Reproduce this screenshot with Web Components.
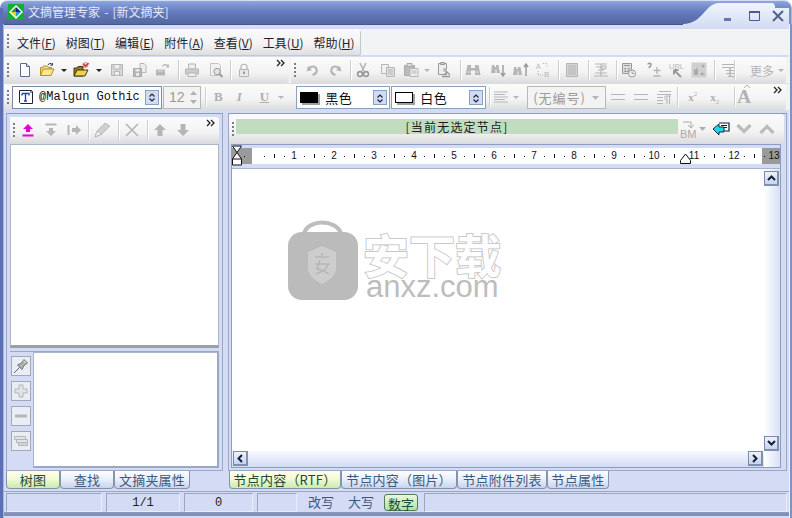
<!DOCTYPE html>
<html lang="zh"><head><meta charset="utf-8"><title>文摘管理专家</title>
<style>
html,body{margin:0;padding:0;width:792px;height:518px;overflow:hidden;background:#fff}
body{font:12px "Noto Sans CJK SC","Liberation Sans",sans-serif}
</style></head><body>
<app-window>
  <title-bar slot="title">文摘管理专家 - [新文摘夹]</title-bar>

  <div slot="rows" style="display:contents">
    <tool-row h="26" mt="5">
      <menu-bar>
        <menu-item key="F">文件</menu-item><menu-item key="T">树图</menu-item><menu-item key="E">编辑</menu-item><menu-item key="A">附件</menu-item><menu-item key="V">查看</menu-item><menu-item key="U">工具</menu-item><menu-item key="H">帮助</menu-item>
      </menu-bar>
    </tool-row>
    <tool-row h="26" mt="2">
      <tool-bar w="285" more>
        <tool-btn icon="new"></tool-btn><tool-btn icon="open" ml="6"></tool-btn><tool-btn icon="drop" ml="6" k></tool-btn><tool-btn icon="folder" ml="5"></tool-btn><tool-btn icon="drop" ml="7" k></tool-btn><tool-btn icon="save" ml="6"></tool-btn><tool-btn icon="saveas" ml="7"></tool-btn><tool-btn icon="pad" ml="6"></tool-btn><tool-sep ml="8"></tool-sep><tool-btn icon="print" ml="5"></tool-btn><tool-btn icon="preview" ml="8"></tool-btn><tool-sep ml="6"></tool-sep><tool-btn icon="lock" ml="5"></tool-btn>
      </tool-bar>
      <tool-bar w="495" ml="2">
        <tool-btn icon="undo"></tool-btn><tool-btn icon="redo" ml="8"></tool-btn><tool-sep ml="6"></tool-sep><tool-btn icon="cut" ml="4"></tool-btn><tool-btn icon="copy" ml="9"></tool-btn><tool-btn icon="paste" ml="7"></tool-btn><tool-btn icon="drop" ml="5"></tool-btn><tool-btn icon="docfind" ml="5"></tool-btn><tool-sep ml="8"></tool-sep><tool-btn icon="binoc" ml="4"></tool-btn><tool-btn icon="binocd" ml="9"></tool-btn><tool-btn icon="binocu" ml="7"></tool-btn><tool-btn icon="ab" ml="6"></tool-btn><tool-sep ml="7"></tool-sep><tool-btn icon="list" ml="5"></tool-btn><tool-sep ml="8"></tool-sep><tool-btn icon="stamp" ml="4"></tool-btn><tool-sep ml="7"></tool-sep><tool-btn icon="clock" ml="4"></tool-btn><tool-btn icon="plusminus" ml="9"></tool-btn><tool-btn icon="url" ml="7"></tool-btn><tool-btn icon="pic" ml="6"></tool-btn><tool-sep ml="7"></tool-sep><tool-btn icon="lines" ml="5"></tool-btn><tool-sep ml="-2"></tool-sep>
        <span style="margin-left:15px;color:#b4b4b4;font-size:12px;white-space:nowrap">更多</span><tool-btn icon="drop" ml="4"></tool-btn>
      </tool-bar>
    </tool-row>
    <tool-row h="26" mt="1">
      <tool-bar w="782" more>
        <combo-box w="150" ml="-5" mono><tool-btn icon="fontT" k></tool-btn><span style="margin-left:5px">@Malgun Gothic</span></combo-box>
        <combo-box w="38" ml="1" dim num>12</combo-box>
        <tool-sep ml="4"></tool-sep>
        <fmt-glyph ml="8" s="13" f="b">B</fmt-glyph><fmt-glyph ml="14" s="13" f="bi">I</fmt-glyph><fmt-glyph ml="18" s="13" f="bu">U</fmt-glyph><tool-btn icon="drop" ml="9"></tool-btn>
        <combo-box w="94" ml="11" line="#8ea0b8"><color-chip c="#000"></color-chip><span style="margin-left:7px;font-size:13px;letter-spacing:.5px">黑色</span></combo-box>
        <combo-box w="95" ml="1" line="#8ea0b8"><color-chip c="#fff"></color-chip><span style="margin-left:7px;font-size:13px;letter-spacing:.5px">白色</span></combo-box>
        <tool-sep ml="3"></tool-sep>
        <tool-btn icon="align" ml="3"></tool-btn><tool-btn icon="drop" ml="4"></tool-btn>
        <combo-box w="79" ml="7" dim plain>(无编号)</combo-box>
        <tool-btn icon="eq" ml="4"></tool-btn><tool-btn icon="eq" ml="7"></tool-btn><tool-btn icon="para" ml="7"></tool-btn><tool-sep ml="5"></tool-sep>
        <fmt-glyph ml="10" s="11" f="b" w="16" sup="2">x</fmt-glyph><fmt-glyph ml="6" s="11" f="b" w="16" sub="2">x</fmt-glyph><tool-sep ml="8"></tool-sep>
        <fmt-glyph ml="2" s="19" f="b" w="22" cap>A</fmt-glyph>
      </tool-bar>
    </tool-row>
  </div>

  <panel-frame slot="left" x="left">
    <tool-bar w="209" more slim>
      <tool-btn icon="upl" ml="-2"></tool-btn><tool-btn icon="downl" ml="7"></tool-btn><tool-btn icon="rightl" ml="7"></tool-btn><tool-sep ml="6"></tool-sep><tool-btn icon="eraser" ml="5"></tool-btn><tool-sep ml="8"></tool-sep><tool-btn icon="x" ml="5"></tool-btn><tool-sep ml="7"></tool-sep><tool-btn icon="up" ml="4"></tool-btn><tool-btn icon="down" ml="7"></tool-btn>
    </tool-bar>
    <sunk-box h="204"></sunk-box>
    <side-panel>
      <side-btn icon="pin"></side-btn><side-btn icon="plus"></side-btn><side-btn icon="minus"></side-btn><side-btn icon="stack"></side-btn>
    </side-panel>
  </panel-frame>

  <panel-frame slot="right" x="right">
    <node-bar>[当前无选定节点]</node-bar>
    <editor-pane>
      <ruler-bar></ruler-bar>
      <water-mark></water-mark>
    </editor-pane>
  </panel-frame>

  <tab-strip slot="ltabs" pad="6">
    <tab-item w="54" on>树图</tab-item><tab-item w="54">查找</tab-item><tab-item w="76">文摘夹属性</tab-item>
  </tab-strip>
  <tab-strip slot="rtabs" pad="1">
    <tab-item w="112" on>节点内容（RTF）</tab-item><tab-item w="116">节点内容（图片）</tab-item><tab-item w="90">节点附件列表</tab-item><tab-item w="62">节点属性</tab-item>
  </tab-strip>

  <status-bar slot="status">
    <status-pane w="96"></status-pane><status-pane w="74" ml="4">1/1</status-pane><status-pane w="69" ml="4">0</status-pane><status-pane w="40" ml="4"></status-pane>
    <status-pane w="26" ml="11" flat>改写</status-pane><status-pane w="26" ml="14" flat>大写</status-pane><status-pane w="34" ml="10" on>数字</status-pane><status-pane w="363" ml="6"></status-pane>
  </status-bar>
</app-window>

<script>
const g='#b6b6b6', d='#9a9a9a';
const ICONS={
 new:`<path d="M3.5 1.5h6l3 3v10h-9z" fill="#fff" stroke="#5c6c8c"/><path d="M9.5 1.5v3h3" fill="#dfe6f2" stroke="#5c6c8c"/>`,
 open:`<path d="M1.5 13.5v-8h2l1-1.5h4l1 1.5h3v2" fill="#f6dc7a" stroke="#b49020"/><path d="M1.5 13.5l2.5-6.5h11l-3 6.5z" fill="#fbe88e" stroke="#b49020"/><path d="M9 3c1-2 3-2 4-.5M13.5 1v2.2h-2.2" fill="none" stroke="#345"/>`,
 folder:`<path d="M1 14V6h3l1-1.5h5V14z" fill="#8c7a20" stroke="#443a10"/><path d="M1 14l3-6h11l-3 6z" fill="#eed04a" stroke="#443a10"/><path d="M10 1.5l2.5 2.5 3-3" fill="none" stroke="#d03030" stroke-width="1.6"/><circle cx="12.5" cy="3" r="2.4" fill="none" stroke="#d06060" stroke-width=".8"/>`,
 drop:`<path d="M0 7h6l-3 3z" fill="${g}"/>`,
 save:`<path d="M2.5 2.5h11v11h-11z" fill="#d8d8d8" stroke="${g}"/><path d="M5 3v4h6V3M5.5 13V9.5h5V13" fill="#eee" stroke="${g}"/>`,
 saveas:`<path d="M8 1.5h4l2 2v7H8z" fill="#eee" stroke="${g}"/><path d="M1.5 6.5h8v8h-8z" fill="${g}" stroke="#a8a8a8"/><path d="M3.5 7v2.5h4V7M4 14v-3h3v3" fill="#e8e8e8"/>`,
 pad:`<path d="M2 7.5h9v6H2z" fill="${g}"/><path d="M8.5 4.5c1-2.5 4.5-2.5 5.5 0M14.3 2.5v2.5h-2.5" fill="none" stroke="${g}" stroke-width="1.2"/><path d="M3.5 8.5h6v1h-6z" fill="#ddd"/>`,
 print:`<path d="M4.5 2h7v5h-7z" fill="#eee" stroke="${g}"/><path d="M1.5 7h13v5h-13z" fill="#ccc" stroke="${g}"/><path d="M4 11h8v3.5H4z" fill="#eee" stroke="${g}"/>`,
 preview:`<path d="M2.5 1.5h8l2 2v10h-10z" fill="#f2f2f2" stroke="#c4c4c4"/><circle cx="9" cy="9.5" r="3.2" fill="#e4e4e4" stroke="${d}"/><path d="M11.5 12l3 3" stroke="${d}" stroke-width="2"/>`,
 lock:`<path d="M5 7V4.5c0-3 6-3 6 0V7" fill="none" stroke="${g}" stroke-width="1.2"/><path d="M3.5 7.5h9v7h-9z" fill="#e8e8e8" stroke="${g}"/><path d="M8 9.5v2.5" stroke="${d}" stroke-width="2"/>`,
 undo:`<path d="M4 4L2.5 9.5 8 8" fill="${g}"/><path d="M4.5 6.5c3-3 7-2.5 8 0.5s-1 5-4 6" fill="none" stroke="${g}" stroke-width="2.2"/>`,
 redo:`<path d="M12 4l1.5 5.5L8 8" fill="${g}"/><path d="M11.5 6.5c-3-3-7-2.5-8 .5s1 5 4 6" fill="none" stroke="${g}" stroke-width="2.2"/>`,
 cut:`<path d="M5 1l4 8M11 1L7 9" stroke="${g}" stroke-width="1.6" fill="none"/><circle cx="5" cy="12" r="2.4" fill="none" stroke="${d}" stroke-width="1.6"/><circle cx="11" cy="12" r="2.4" fill="none" stroke="${d}" stroke-width="1.6"/>`,
 copy:`<path d="M1.5 2.5h7v9h-7z" fill="#f0f0f0" stroke="${g}"/><path d="M6.5 5.5h8v9h-8z" fill="#e0e0e0" stroke="${g}"/><path d="M8 8h5M8 10h5M8 12h5" stroke="${g}"/>`,
 paste:`<path d="M1.5 3.5h10v10h-10z" fill="#bbb" stroke="#aaa"/><path d="M4 1.5h5v3H4z" fill="#ddd" stroke="#aaa"/><path d="M7 6.5h8v8H7z" fill="#eee" stroke="${g}"/><path d="M8.5 9h5M8.5 11h5" stroke="${g}"/>`,
 docfind:`<path d="M2.5 1.5h8v11h-8z" fill="#eee" stroke="${d}"/><path d="M4.5 0.5h4v2h-4z" fill="#ccc" stroke="${d}"/><path d="M9 8l5 5M8 13l3-3M6 14.5h8" stroke="${d}" stroke-width="1.4"/><circle cx="9" cy="8" r="2" fill="#bbb"/>`,
 binoc:`<path d="M2.5 3h3.500v3h4V3h3.500l2 10h-5.500V8.500h-4V13H.5z" fill="${g}"/><path d="M2.500 10h3M10.500 10h3" stroke="#e8e8e8"/>`,
 binocd:`<path d="M2 3h2.500v2H6V3h2.500L10 11H6.500V7.500h-1V11H1z" fill="${g}"/><path d="M13 3v10M11 11l2 3 2-3" stroke="${d}" fill="none" stroke-width="1.4"/>`,
 binocu:`<path d="M1 5h2.500v2H5V5h2.500L9 13H5.500V9.500h-1V13H0z" fill="${g}"/><path d="M13 14V3M11 5l2-3 2 3" stroke="${d}" fill="none" stroke-width="1.4"/>`,
 ab:`<text x="1" y="7" font-size="7" fill="${g}" font-family="Liberation Sans">A</text><text x="9" y="15" font-size="8" fill="${g}" font-family="Liberation Sans">B</text><path d="M8 1.5h4M12 1.5v3M3 9v4h5" stroke="${g}" stroke-dasharray="1 1" fill="none"/>`,
 list:`<path d="M2.5 1.5h11v13h-11z" fill="#d4d4d4" stroke="${g}"/><path d="M4 4h8M4 6h8M4 8h8M4 10h8M4 12h8" stroke="${g}"/>`,
 stamp:`<path d="M2 2h12M3 5h10M5 8h6M2 11h12M1 14h14M8 2v12" stroke="${g}" stroke-width="1.2"/><path d="M9 4h4v3H9z" fill="#e6e6e6" stroke="${g}"/>`,
 clock:`<path d="M1.5 1.5h9v10h-9z" fill="#ddd" stroke="${d}"/><path d="M3 3.5h6" stroke="${d}"/><text x="2.5" y="9.5" font-size="6" fill="#777" font-family="Liberation Sans">12</text><circle cx="11" cy="11.5" r="3.6" fill="#eee" stroke="${d}"/><path d="M11 9.5v2h2" stroke="${d}" fill="none"/>`,
 plusminus:`<path d="M2 2.5c0-1.6 3-1.6 3 0 0 1.5-1 2.6-2.4 3.2" fill="none" stroke="${d}" stroke-width="1.6"/><path d="M11 5v7M7.5 8.500h7M7.500 14h7" stroke="${g}" stroke-width="1.4"/>`,
 url:`<text x="0" y="7" font-size="7.500" fill="${g}" font-family="Liberation Sans">URL</text><path d="M5 8l7 7M5 8v4.500M5 8h4.500" stroke="${d}" stroke-width="2" fill="none"/>`,
 pic:`<path d="M0.5 0.5h15v15h-15z" fill="#d0d0d0"/><path d="M3 13V7l2 1V5l2 3v5zM9 13l2-3 3 3zM12 2.500a1.500 1.500 0 1 1 0 3 1.500 1.500 0 0 1 0-3" fill="#aaa"/>`,
 lines:`<path d="M2 2.500h12M2 5.500h12M6 8.500h8M6 11.500h8M8 14.500h6" stroke="${g}" stroke-width="1.200"/><path d="M10 5v10" stroke="${g}" stroke-width="1.600"/>`,
 fontT:`<path d="M1.500 1.500h12l1 1v12h-12l-1-1z" fill="#fff" stroke="#223"/><path d="M4 4.500h7v2M7.500 4.500V12M6 12h3M4 4.500v2" stroke="#2040c0" stroke-width="1.300" fill="none"/><path d="M13 1v3" stroke="#223"/>`,
 align:`<path d="M1 3h14M1 5.500h11M1 8h14M1 10.500h11M1 13h14" stroke="${g}"/>`,
 eq:`<path d="M1 5.500h14M1 10.500h14" stroke="${g}"/>`,
 para:`<path d="M3 2.500h12M1 5.500h14M1 8.500h6M1 11.500h6M1 14.500h6" stroke="${g}"/><path d="M11 7v8M13.500 7v8M10 7h5M10 7c-2 0-2 4 1 4" stroke="${g}" fill="none"/>`,
 upl:`<path d="M8 2l5 5h-3v3H6V7H3z" fill="#e800d8"/><path d="M2.500 13.500h11" stroke="#e800d8" stroke-width="2"/>`,
 downl:`<path d="M8 14l5-5h-3V6H6v3H3z" fill="${g}"/><path d="M2.500 2.500h11" stroke="${g}" stroke-width="2"/>`,
 rightl:`<path d="M15 8l-5-5v3H6v4h4v3z" fill="${g}"/><path d="M2.500 3v10" stroke="${g}" stroke-width="2"/>`,
 eraser:`<path d="M1 15l2-6L11 1l5 3-8 8z" fill="#d0d0d0" stroke="#bbb"/><path d="M1 15l2-6 5 3z" fill="#eee" stroke="#bbb"/>`,
 x:`<path d="M2 2l12 12M14 2L2 14" stroke="${g}" stroke-width="1.700"/>`,
 up:`<path d="M8 2l6 6h-3.500v6h-5V8H2z" fill="${g}"/>`,
 down:`<path d="M8 14l6-6h-3.500V2h-5v6H2z" fill="${g}"/>`,
 pin:`<path d="M1 15l6-6" stroke="#666" stroke-width="1"/><path d="M4.500 7l4-2 2.500-3.500 3.500 3.500L11 7.500l-2 4z" fill="#b0b0b0" stroke="#777"/><path d="M10.500 3l2.500 2" stroke="#eee"/>`,
 plus:`<path d="M6 2h4v4h4v4h-4v4H6v-4H2V6h4z" fill="#dfe3ea" stroke="${g}"/>`,
 minus:`<path d="M2 6.500h12v3H2z" fill="${g}"/>`,
 stack:`<path d="M1.500 3.500h11v3h-11zM3.500 6.500h11v3h-11z" fill="#dfe3ea" stroke="${g}"/><path d="M5.500 9.500h9v3h-9z" fill="#cfd3da" stroke="${g}"/>`
};
function def(name,css,html,init){
  customElements.define(name,class extends HTMLElement{
    connectedCallback(){
      if(this.shadowRoot)return;
      const a=n=>this.getAttribute(n);
      const r=this.attachShadow({mode:'open'});
      r.innerHTML=`<style>${typeof css==='function'?css(a,this):css}</style>`+(typeof html==='function'?html(a,this):html);
      if(init)init(r,a,this);
    }
  });
}
const ML=a=>a('ml')?`margin-left:${a('ml')}px;`:'';
const GRIP=`<svg width="3" height="16" viewBox="0 0 3 16" style="flex:none"><g fill="#7c7c84"><rect y="1" width="2" height="2"/><rect y="5" width="2" height="2"/><rect y="9" width="2" height="2"/><rect y="13" width="2" height="2"/></g></svg>`;
const CHEV=`<svg width="10" height="8" viewBox="0 0 10 8" style="display:block"><path d="M1 1l3 3-3 3M5 1l3 3-3 3" fill="none" stroke="#222" stroke-width="1.300"/></svg>`;

def('app-window',`
 :host{display:grid;width:792px;height:518px;position:relative;background:#d3dcf4;
   grid-template-columns:6px 217px 5px 559px 5px;
   grid-template-rows:24px auto 1fr 20px 21px 6px;overflow:hidden}
 .title{grid-column:1/-1;grid-row:1}
 .rows{grid-column:1/-1;grid-row:2;display:flex;flex-direction:column;padding-bottom:3px;background:#d3dcf4}
 .left{grid-column:2;grid-row:3;min-height:0}
 .right{grid-column:4;grid-row:3;min-height:0}
 .lt{grid-column:1/3;grid-row:4}
 .rt{grid-column:4;grid-row:4}
 .st{grid-column:1/-1;grid-row:5}
 .edgeL,.edgeR{position:absolute;top:24px;bottom:0;width:3px;background:#5a6fb5}
 .edgeL{left:0;border-right:1px solid #a8b6dc}
 .edgeR{right:0;width:2px;background:#7f92c4;border-left:1px solid #eef2fb}
 .foot{grid-column:1/-1;grid-row:6;background:#e8ecf6;border-top:1px solid #8c9ab8;height:3px;box-shadow:0 3px 0 #7f8fb8 inset;}
`,`<div class="title"><slot name="title"></slot></div>
 <div class="rows"><slot name="rows"></slot></div>
 <div class="left"><slot name="left"></slot></div>
 <div class="right"><slot name="right"></slot></div>
 <div class="lt"><slot name="ltabs"></slot></div>
 <div class="rt"><slot name="rtabs"></slot></div>
 <div class="st"><slot name="status"></slot></div>
 <div class="foot"></div><div class="edgeL"></div><div class="edgeR"></div>`);

def('title-bar',`
 :host{display:block;height:24px;position:relative;color:#e4eafb;font-size:12px;line-height:24px;word-spacing:1.5px}
 svg.bg{position:absolute;left:0;top:0}
 .row{position:relative;display:flex;align-items:center;height:24px;padding-left:8px}
 .logo{margin-right:4px;flex:none}
 .ctl{position:absolute;top:0;left:0}
`,`<svg class="bg" width="792" height="28" viewBox="0 0 792 28">
 <defs><linearGradient id="t" x1="0" y1="0" x2="0" y2="1"><stop offset="0" stop-color="#8ea8e0"/><stop offset=".18" stop-color="#7d94d0"/><stop offset=".5" stop-color="#6479bd"/><stop offset="1" stop-color="#53689f"/></linearGradient>
 <linearGradient id="n" x1="0" y1="0" x2="0" y2="1"><stop offset="0" stop-color="#f2f6fd"/><stop offset="1" stop-color="#d3dcf4"/></linearGradient></defs>
 <rect width="792" height="28" fill="#d3dcf4"/>
 <path d="M0 8a7 7 0 0 1 7-7H782a8 8 0 0 1 8 8V28H0z" fill="url(#n)"/>
 <path d="M0 8a7 7 0 0 1 7-7H784a7 7 0 0 1 7 7H775a5 5 0 0 0-2-5H719c-14 0-16 21-36 21H0z" fill="url(#t)"/>
 <path d="M0 24.500h683" stroke="#44568c"/><path d="M0 0h8C3 0 0 3 0 8z" fill="#fff"/><path d="M792 0h-8c5 0 8 3 8 8z" fill="#fff"/>
 <path d="M0 8h3V28H0z" fill="#5a6fb5"/><path d="M789 4c2 1 2.500 3 2.500 5V28H789z" fill="#7f92c4"/>
 </svg>
 <div class="row"><svg class="logo" width="16" height="16" viewBox="0 0 16 16"><rect width="16" height="16" fill="#10b030"/><path d="M8 1l7 7-7 7-7-7z" fill="#fff"/><path d="M8 3l5 5H8z" fill="#1c1c90"/><path d="M8 3L3 8h5z" fill="#10a040"/><path d="M3 8l5 5V8z" fill="#e8d020"/><path d="M13 8l-5 5V8z" fill="#20a0d0"/></svg><slot></slot></div>
 <svg class="ctl" width="792" height="24" viewBox="0 0 792 24"><path d="M724 18h7v3h-7z" fill="#6478ae"/><path d="M749.500 11.500h10v9h-10z" fill="none" stroke="#4a5c8c"/><path d="M749 11h11v2h-11z" fill="#4a5c8c"/><path d="M773 11l10 10M783 11l-10 10" stroke="#4f618f" stroke-width="2"/></svg>`);

def('tool-row',a=>`:host{display:flex;align-items:stretch;height:${a('h')}px;margin-top:${a('mt')||0}px;background:#f2f3f5;margin-left:4px;margin-right:3px}`,`<slot></slot>`);

def('menu-bar',`:host{display:flex;align-items:center;width:356px;box-sizing:border-box;padding-left:3px;border-radius:0 3px 3px 0;background:linear-gradient(#fbfbfb,#f2f2f2 60%,#dedede);box-shadow:1px 1px 0 #c8c8c8;flex:none}
 .g{margin-right:7px}`,`<div class="g">${GRIP}</div><slot></slot>`);
def('menu-item',`:host{display:block;color:#1c2230;font-size:12px;margin-right:10px;white-space:nowrap;letter-spacing:0}
 u{text-underline-offset:1px}`,a=>`<slot></slot>(<u>${a('key')}</u>)`);

def('tool-bar',a=>`:host{display:flex;align-items:center;flex:none;position:relative;width:${a('w')}px;${ML(a)}${a('slim')!==null?'height:26px;':''}box-sizing:border-box;padding-left:3px;background:linear-gradient(#fbfbfb,#f3f3f3 60%,#dcdcdc);border-radius:0 3px 3px 0}
 .g{margin-right:${a('slim')!==null?6:7}px;display:flex}
 .m{position:absolute;right:3px;top:2px}`,a=>`<div class="g">${GRIP}</div><slot></slot>${a('more')!==null?`<div class="m">${CHEV}</div>`:''}`);
def('tool-btn',a=>`:host{display:block;flex:none;${ML(a)}width:${a('icon')==='drop'?7:16}px;height:16px}svg{display:block}`,
  a=>{const k=a('k')!==null&&a('icon')==='drop';const w=a('icon')==='drop'?7:16;
  return `<svg width="${w}" height="16" viewBox="0 0 ${w} 16">${k?ICONS.drop.replace(g,'#222'):ICONS[a('icon')]}</svg>`});
def('tool-sep',a=>`:host{display:block;flex:none;width:1px;height:20px;background:#d0d0d0;box-shadow:1px 0 0 #fff;${ML(a)}}`,``);
def('combo-box',a=>`:host{display:flex;align-items:center;flex:none;position:relative;box-sizing:border-box;height:23px;width:${a('w')}px;${ML(a)}
   border:1px solid ${a('line')||(a('dim')!==null?'#b8b8b8':'#7c8aa0')};background:${a('dim')!==null?'#f3f3f3':'#fff'};padding-left:${a('line')?2:5}px;
   color:${a('dim')!==null?'#9a9a9a':'#111'};font-size:${a('plain')!==null?'13px;letter-spacing:1px':'12px'};white-space:nowrap;
   ${a('mono')!==null?'font-family:"Liberation Mono",monospace;':''}${a('num')!==null?'font-family:"Liberation Sans",sans-serif;font-size:14px;':''}}
 .s{position:absolute;right:2px;top:3px;width:14px;height:15px;background:#cfdcf2;border:1px solid #8ea0c0;box-sizing:border-box}
 .n{position:absolute;right:2px;top:2px}
 .d{position:absolute;right:6px;top:7px}`,a=>`<slot></slot>`+
 (a('num')!==null?`<svg class="n" width="9" height="17" viewBox="0 0 9 17"><path d="M1 6l3.500-4L8 6zM1 11l3.500 4L8 11z" fill="#b0b0b0"/></svg>`:
  a('plain')!==null?`<svg class="d" width="7" height="10"><path d="M0 2h7L3.500 6z" fill="#b6b6b6"/></svg>`:
  `<div class="s"><svg width="12" height="13" viewBox="0 0 12 13"><path d="M3.500 5.500l2.500-2.500 2.500 2.500M3.500 7.500l2.500 2.500 2.500-2.500" fill="none" stroke="#223" stroke-width="1.200"/></svg></div>`));
def('color-chip',a=>`:host{display:block;flex:none;width:18px;height:11px;background:${a('c')};border:1px solid #000;box-sizing:border-box;box-shadow:2px 2px 0 #a0a0a0;margin-left:1px}`,``);
def('fmt-glyph',a=>{const f=a('f')||'';return `:host{display:block;flex:none;${ML(a)}${a('w')?`width:${a('w')}px;`:''}color:#b0b0b0;position:relative;line-height:16px;
   font-family:"Liberation Serif",serif;font-size:${a('s')}px;font-weight:bold;${f.includes('i')?'font-style:italic;':''}${f.includes('u')?'text-decoration:underline;':''}}
 sup,sub{font-size:7px;line-height:0;font-weight:normal} .c{position:absolute;left:6px;top:-5px}`},
 a=>`<slot></slot>${a('sup')?`<sup>${a('sup')}</sup>`:''}${a('sub')?`<sub>${a('sub')}</sub>`:''}${a('cap')!==null?`<svg class="c" width="8" height="5"><path d="M1 4l3-3 3 3" fill="none" stroke="#b0b0b0"/></svg>`:''}`);

def('panel-frame',a=>`:host{display:flex;flex-direction:column;box-sizing:border-box;height:100%;margin-top:0;background:#d3dcf4;
   border:1px solid #9aa8c4;border-top:1px solid #8c9cbc;padding:${a('x')==='left'?'3px 3px 2px 3px':'0'};}`,`<slot></slot>`);
def('sunk-box',a=>`:host{display:block;flex:none;height:${a('h')}px;background:#fff;box-sizing:border-box;margin-top:1px;border:1px solid #aab6cc;border-bottom:3px solid #9a9fa8}`,``);
def('side-panel',`:host{display:flex;flex:1;margin-top:3px;min-height:0;box-sizing:border-box;background:#d3dcf4;border:1px solid #9aa8c4;border-width:1px 0 0 0}
 .c{display:flex;flex-direction:column;gap:5px;width:23px;padding:4px 0 0 1px;box-sizing:border-box;flex:none}
 .b{flex:1;background:#fff;border:1px solid #aab6cc;border-right:2px solid #9aa8c4;border-bottom:2px solid #9aa8c4}`,
 `<div class="c"><slot></slot></div><div class="b"></div>`);
def('side-btn',`:host{display:flex;align-items:center;justify-content:center;width:20px;height:20px;box-sizing:border-box;border:1px solid #a4a9b4;background:#e9edf6}svg{display:block}`,
 a=>`<svg width="16" height="16" viewBox="0 0 16 16">${ICONS[a('icon')]}</svg>`);

def('node-bar',`:host{display:flex;align-items:center;flex:none;height:29px;box-sizing:border-box;position:relative;padding-left:3px;margin:0 1px 1px 0;width:555px;background:linear-gradient(#fbfbfb,#f3f3f3 60%,#dedede);border-radius:0 3px 3px 0}
 .g{display:flex;margin-right:1px}
 .t{width:442px;height:15px;margin-top:-5px;background:#c2dcc0;text-align:center;font:12px/15px "Noto Sans CJK SC",sans-serif;color:#1c1c1c;letter-spacing:1.2px;overflow:hidden}
 .r{display:flex;align-items:center;position:relative;margin-left:2px}
 .bm{width:18px;height:24px;color:#aaa;font:11px/11px "Liberation Sans",sans-serif;padding-top:12px;box-sizing:border-box;position:relative}
 svg{display:block;flex:none}`,
 ()=>`<div class="g">${GRIP}</div><div class="t"><slot></slot></div>
 <div class="r"><div class="bm">BM<svg style="position:absolute;left:2px;top:3px" width="14" height="9"><path d="M1 2h8v5M6 5l3 3 3-3" fill="none" stroke="#aaa"/></svg></div>
 <svg style="margin:0 0 0 1px" width="7" height="8"><path d="M0 2h7L3.500 6z" fill="#b0b0b0"/></svg>
 <svg style="margin-left:6px" width="18" height="16" viewBox="0 0 18 16"><path d="M7 2h10v8H10" fill="#fff" stroke="#102038" stroke-width="1.200"/><path d="M9 4.500h6M9 6.500h6" stroke="#102038"/><path d="M1 8l6-5v3h5v5H7v3z" fill="#22d8e8" stroke="#0c3040"/></svg>
 <svg style="margin-left:6px" width="16" height="12" viewBox="0 0 16 12"><path d="M1.500 2l6.500 6.500L14.500 2" fill="none" stroke="#bcbcbc" stroke-width="3.200"/></svg>
 <svg style="margin-left:7px" width="16" height="12" viewBox="0 0 16 12"><path d="M1.500 10L8 3.500 14.500 10" fill="none" stroke="#bcbcbc" stroke-width="3.200"/></svg></div>`);

def('editor-pane',`:host{display:grid;flex:1;min-height:0;position:relative;grid-template-columns:1fr 16px;grid-template-rows:auto 1fr 16px;margin:0 5px 2px 2px;background:#d3dcf4;border:1px solid #8c9cbc;border-bottom:1px solid #8c9cbc}
 .ru{grid-column:1/-1}
 .doc{grid-column:1;grid-row:2;background:#fff;position:relative;overflow:hidden}
 .vs{grid-column:2;grid-row:2/4;display:flex;flex-direction:column;justify-content:space-between;padding:2px 0 16px 0;background:linear-gradient(90deg,#fff,#d8e0f6)}
 .hs{grid-column:1;grid-row:3;display:flex;justify-content:space-between;padding:0 1px;background:linear-gradient(#f6f8fe,#d3dcf4)}
 .b{width:15px;height:15px;box-sizing:border-box;border:1px solid #7a8aa8;border-right:2px solid #8090b0;border-bottom:2px solid #8090b0;background:linear-gradient(#eef2fc,#c8d4ee);display:flex;align-items:center;justify-content:center}
 svg{display:block}`,
 ()=>`<div class="ru"><slot name="r"></slot></div><div class="doc"><slot></slot></div>
 <div class="vs"><div class="b"><svg width="9" height="6"><path d="M1 5l3.500-3.500L8 5" fill="none" stroke="#102038" stroke-width="2"/></svg></div><div class="b"><svg width="9" height="6"><path d="M1 1l3.500 3.500L8 1" fill="none" stroke="#102038" stroke-width="2"/></svg></div></div>
 <div class="hs"><div class="b"><svg width="6" height="9"><path d="M5 1L1.500 4.500 5 8" fill="none" stroke="#102038" stroke-width="2"/></svg></div><div class="b"><svg width="6" height="9"><path d="M1 1l3.500 3.500L1 8" fill="none" stroke="#102038" stroke-width="2"/></svg></div></div>`,
 (r,a,h)=>{const rb=h.querySelector('ruler-bar');rb&&rb.setAttribute('slot','r');});

def('ruler-bar',`:host{display:block;height:24px;box-sizing:border-box;padding-top:3px;background:#d3dcf4;border-bottom:1px solid #a8b4cc;position:relative}
 .line{display:flex;height:16px;background:#fff;margin-right:0;width:548px;align-items:center;font:10px "Liberation Sans",sans-serif;color:#111;position:relative}
 .c{flex:none;width:10px;text-align:center;line-height:16px;overflow:visible;white-space:nowrap;display:flex;justify-content:center;align-items:center}
 .c i{display:block;background:#111}
 .dot i{width:1px;height:1px}.tk i{width:1px;height:4px}
 .gl,.gr{position:absolute;top:0;height:16px;background:#9a9a9a}
 .gl{left:0;width:20px}.gr{right:0;width:18px}
 .line>.c{position:relative}
 .hg{position:absolute;left:-1px;top:-3px}.tri{position:absolute;left:448px;top:5px}`,
 ()=>{let h='<div class="gl"></div><div class="gr"></div>';
  h+='<span style="flex:none;width:7px"></span>';
  for(let x=239;x<774;x+=10){
    const off=x+5-254, q=((off%40)+40)%40, n=off/40;
    let c='';
    if(q===0&&n>0) c=`<div class="c">${n}</div>`;
    else if(q===0) c=`<div class="c"></div>`;
    else if(q===20) c=`<div class="c tk"><i></i></div>`;
    else c=`<div class="c dot"><i></i></div>`;
    h+=c;
  }
  h+=`<svg class="hg" width="12" height="21" viewBox="0 0 12 21"><path d="M1.500 1h9L6 7.500l4.500 6.500v6h-9v-6L6 7.500z" fill="#fff" stroke="#111"/><path d="M1.500 14h9" stroke="#111"/></svg>
  <svg class="tri" width="11" height="11" viewBox="0 0 11 11"><path d="M.5 10.500V7.500L5.500 1l5 6.500v3z" fill="#fff" stroke="#111"/></svg>`;
  return `<div class="line">${h}</div>`;
 });

def('water-mark',`:host{position:absolute;left:55px;top:50px;display:block;width:225px;height:85px;pointer-events:none}
 svg{position:absolute;left:0;top:0}
 .cn{position:absolute;left:76px;top:14px;font:bold 46px/40px "Noto Sans CJK SC",sans-serif;color:#fff;-webkit-text-stroke:2px #c9c9c9;paint-order:stroke;white-space:nowrap}
 .en{position:absolute;left:79px;top:54px;font:31px/28px "Liberation Sans",sans-serif;color:#bdbdbd;white-space:nowrap}`,
 `<svg width="72" height="82" viewBox="0 0 72 82"><path d="M17 14C22 0 48 0 54 14" fill="none" stroke="#bdbdbd" stroke-width="4"/><rect x="1" y="13" width="70" height="68" rx="14" fill="#bbb"/><path d="M21 33l14-6 14 6v16c0 8-8 13-14 16-6-3-14-8-14-16z" fill="#cdcdcd"/><path d="M28 38h14M35 34v3M28 45h15M33 41l-3 9c4 0 8 3 12 5M41 45l-3 6-9 4" fill="none" stroke="#b6b6b6" stroke-width="1.600"/></svg>
 <div class="cn">安下载</div><div class="en">anxz.com</div>`);

def('tab-strip',a=>`:host{display:flex;height:20px;box-sizing:border-box;padding-left:${a('pad')}px;padding-top:0}`,`<slot></slot>`);
def('tab-item',a=>`:host{display:block;flex:none;box-sizing:border-box;width:${a('w')}px;height:18px;margin-right:0;text-align:center;font-size:13px;line-height:17px;letter-spacing:.2px;white-space:nowrap;color:${a('on')!==null?'#1f4a3a':'#3c5a7c'};
  border:1px solid #8794a8;border-top:0;border-radius:0 0 4px 4px;background:${a('on')!==null?'linear-gradient(#ffffe8,#f6fbd8 40%,#c8ecb0)':'linear-gradient(#fdfeff,#e8eefa 50%,#c8d4ee)'}}`,`<slot></slot>`);

def('status-bar',`:host{display:flex;height:21px;box-sizing:border-box;padding:1px 0 0 6px;border-top:1px solid #9aa6bc;background:#d3dcf4}`,`<slot></slot>`);
def('status-pane',a=>{const on=a('on')!==null,fl=a('flat')!==null;return `:host{display:block;flex:none;box-sizing:border-box;width:${a('w')}px;${ML(a)}height:${on?'17':'19'}px;${on?'margin-top:1px;':''}text-align:center;white-space:nowrap;
   font:${(on||fl)?'13px/17px "Noto Sans CJK SC",sans-serif':'12px/18px "Liberation Mono",monospace'};color:${on?'#1f4a3a':fl?'#3c5a7c':'#222'};
   ${fl?'':on?'border:1px solid #557a55;border-radius:3px;background:linear-gradient(#eef8e0,#a8e6a0);':'border:1px solid;border-color:#9aa6bc #e8eefa #e8eefa #9aa6bc;'}}`},`<slot></slot>`);
</script>
</body></html>
